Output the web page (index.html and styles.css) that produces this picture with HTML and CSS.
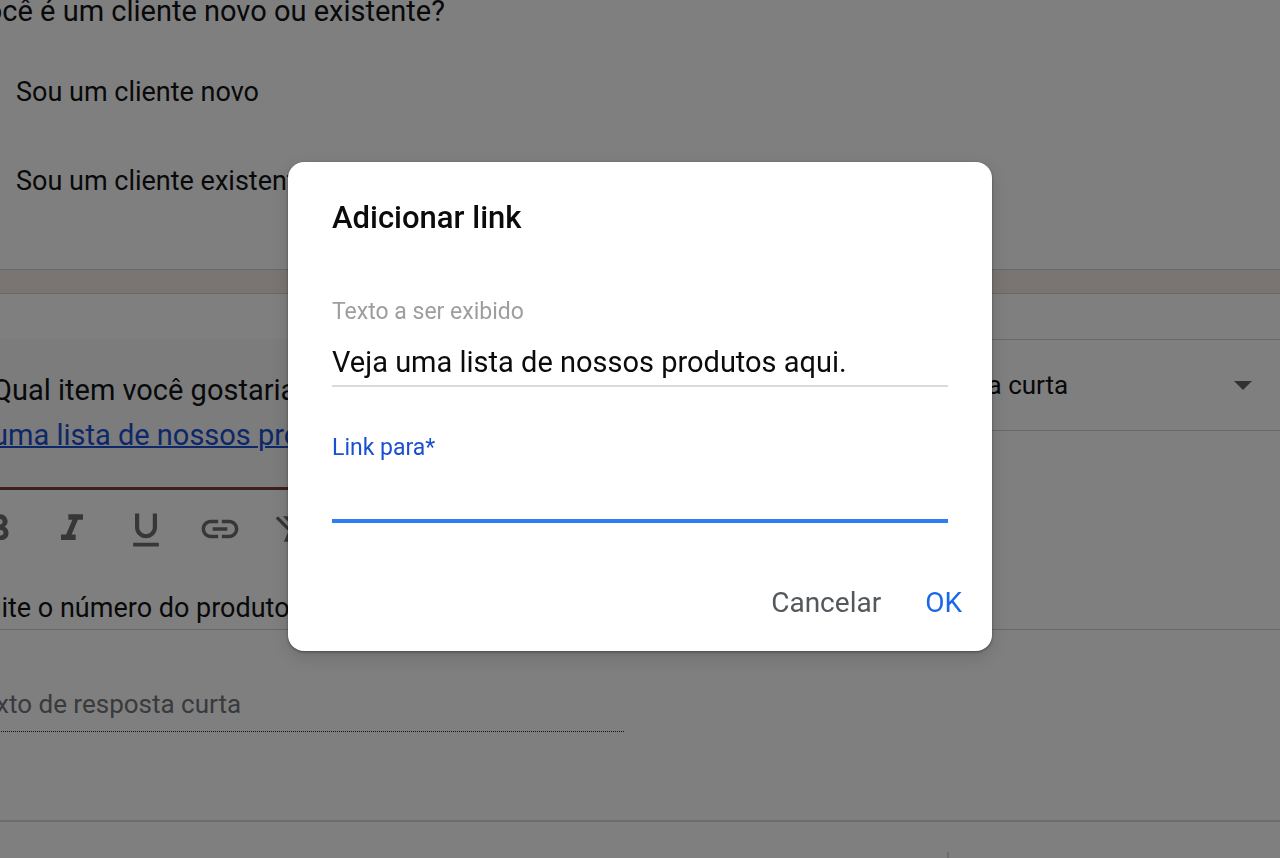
FILE: index.html
```html
<!DOCTYPE html>
<html lang="pt-BR">
<head>
<meta charset="utf-8">
<meta name="viewport" content="width=device-width, initial-scale=1">
<title>Adicionar link</title>
<link rel="stylesheet" href="styles.css">
</head>
<body>
<main class="form">
  <section class="card choices">
    <h2 class="question">Você é um cliente novo ou existente?</h2>
    <p class="option">Sou um cliente novo</p>
    <p class="option">Sou um cliente existente</p>
  </section>
  <section class="card editor">
    <div class="editor-top">
      <div class="field">
        <p class="field-text">Qual item você gostaria</p>
        <p class="field-text"><a href="#produtos">uma lista de nossos produtos</a></p>
      </div>
      <button class="type" type="button">
        <span>Resposta curta</span>
        <svg class="caret" viewBox="0 0 18 9" aria-hidden="true"><path d="M0 0h18L9 9z"/></svg>
      </button>
    </div>
    <div class="toolbar">
      <button class="tool" type="button" aria-label="Negrito"><svg viewBox="0 0 24 24"><path d="M15.600 10.790c.970-.670 1.650-1.770 1.650-2.790 0-2.260-1.750-4-4-4H7v14h7.040c2.090 0 3.710-1.700 3.710-3.790 0-1.520-.860-2.820-2.150-3.420zM10 6.500h3c.830 0 1.500.670 1.500 1.500s-.670 1.500-1.500 1.500h-3v-3zm3.500 9H10v-3h3.500c.830 0 1.500.670 1.500 1.500s-.670 1.500-1.500 1.500z"/></svg></button>
      <button class="tool" type="button" aria-label="Itálico"><svg viewBox="0 0 24 24"><path d="M10 4v3h2.210l-3.420 8H6v3h8v-3h-2.210l3.420-8H18V4z"/></svg></button>
      <button class="tool" type="button" aria-label="Sublinhado"><svg viewBox="0 0 24 24"><path d="M12 17c3.310 0 6-2.690 6-6V3.500h-2.300V11c0 2.040-1.660 3.700-3.700 3.700S8.300 13.040 8.300 11V3.500H6V11c0 3.310 2.690 6 6 6zm-7 2.500v2h14v-2H5z"/></svg></button>
      <button class="tool" type="button" aria-label="Inserir link"><svg viewBox="0 0 24 24"><path d="M3.900 12c0-1.710 1.390-3.100 3.100-3.100h4V7H7c-2.760 0-5 2.240-5 5s2.240 5 5 5h4v-1.900H7c-1.710 0-3.100-1.390-3.100-3.100zM8 13h8v-2H8v2zm9-6h-4v1.900h4c1.710 0 3.100 1.390 3.100 3.100s-1.390 3.100-3.100 3.100h-4V17h4c2.760 0 5-2.240 5-5s-2.240-5-5-5z"/></svg></button>
      <button class="tool" type="button" aria-label="Remover formatação"><svg viewBox="0 0 24 24"><path d="M3.270 5L2 6.270l6.970 6.970L6.500 19h3l1.570-3.660L16.730 21 18 19.730 3.550 5.270 3.270 5zM6 5v.180L8.820 8h2.400l-.720 1.680 2.100 2.100L14.210 8H20V5H6z"/></svg></button>
    </div>
    <p class="description">Digite o número do produto</p>
    <div class="answer"><p class="answer-line">Texto de resposta curta</p></div>
    <footer class="card-footer"><span class="divider"></span></footer>
  </section>
</main>
<div class="scrim">
  <form class="dialog" role="dialog" aria-modal="true" aria-labelledby="title">
    <h1 class="title" id="title">Adicionar link</h1>
    <label class="label" for="text">Texto a ser exibido</label>
    <input class="input" id="text" type="text" value="Veja uma lista de nossos produtos aqui.">
    <label class="label label-active" for="url">Link para*</label>
    <input class="input input-active" id="url" type="text">
    <div class="actions">
      <button class="action" type="button">Cancelar</button>
      <button class="action action-primary" type="button">OK</button>
    </div>
  </form>
</div>
</body>
</html>
```
FILE: styles.css
```css
* {
  box-sizing: border-box;
}

body {
  margin: 0;
  height: 100vh;
  overflow: hidden;
  background: #f5eae5;
  color: #111214;
  font-family: Roboto, sans-serif;
  font-size: 27px;
  line-height: 32px;
}

h1, h2, p {
  margin: 0;
  font-weight: 400;
}

button {
  border: 0;
  padding: 0;
  background: none;
  color: inherit;
  font: inherit;
}

/* The form is scrolled sideways behind the dialog */
.form {
  display: flex;
  flex-direction: column;
  gap: 23px;
  margin: -6px 0 0 -48px;
}

.card {
  background: #fff;
  border: 1px solid #d0d2d6;
  border-width: 1px 0;
}

.choices {
  padding: 0 0 64px 16px;
}

.question {
  font-size: 29px;
}

.option {
  padding: 49px 0 8px 48px;
}

.editor-top {
  display: flex;
  align-items: flex-start;
  gap: 32px;
  padding-top: 45px;
}

.field {
  flex: 1;
  padding: 29px 0 29px 40px;
  background: #f8f9fa;
  border-bottom: 3px solid #7c3e3e;
  font-size: 29px;
  line-height: 45px;
  white-space: nowrap;
}

.field a {
  color: #1a50d0;
  text-decoration-thickness: 2px;
}

.type {
  display: flex;
  align-items: center;
  justify-content: space-between;
  width: 400px;
  height: 92px;
  padding: 0 28px 0 12px;
  border: 1px solid #d0d2d6;
  border-right: 0;
  font-size: 26px;
}

.caret {
  width: 18px;
  height: 9px;
  fill: #5f6368;
}

.toolbar {
  display: flex;
  gap: 30px;
  padding: 17px 0 0 24px;
}

.tool {
  width: 44px;
  height: 44px;
}

.tool svg {
  display: block;
  width: 44px;
  height: 44px;
  fill: #6e6e6e;
}

.description {
  padding: 41px 0 5px 10px;
  border-bottom: 1px solid #d0d0d0;
}

.answer {
  padding: 58px 0 88px 16px;
}

.answer-line {
  width: 50%;
  padding-bottom: 11px;
  border-bottom: 1px dotted #202124;
  color: #70757a;
  font-size: 26px;
}

.card-footer {
  display: flex;
  height: 38px;
  padding: 30px 331px 0 0;
  border-top: 2px solid #dadada;
  justify-content: flex-end;
}

.divider {
  border-left: 2px solid #dadada;
}

.scrim {
  position: fixed;
  inset: 0;
  display: flex;
  align-items: center;
  justify-content: center;
  padding: 0 32px 45px;
  background: rgba(0, 0, 0, 0.5);
}

.dialog {
  display: flex;
  flex-direction: column;
  width: 100%;
  max-width: 704px;
  padding: 36px 44px 28px;
  border-radius: 16px;
  background: #fff;
  box-shadow: 0 1px 3px rgba(0, 0, 0, 0.4), 0 6px 20px rgba(0, 0, 0, 0.14);
}

.title {
  margin-bottom: 60px;
  color: #0b0b0b;
  font-size: 31px;
  font-weight: 500;
  line-height: 40px;
}

.label {
  color: #9e9e9e;
  font-size: 23px;
  line-height: 28px;
}

.label-active {
  margin-top: 47px;
  color: #1a50d0;
}

.input {
  height: 61px;
  padding: 12px 0 0;
  border: 0;
  border-bottom: 2px solid #dadada;
  outline: 0;
  background: none;
  color: #0b0b0b;
  font: 29px/36px Roboto, sans-serif;
}

.input-active {
  border-bottom: 4px solid #2f7df3;
}

.actions {
  display: flex;
  justify-content: flex-end;
  gap: 44px;
  margin: 60px -14px 0 0;
}

.action {
  color: #54585d;
  font-size: 28px;
  line-height: 40px;
}

.action-primary {
  color: #1a68e8;
}
```
